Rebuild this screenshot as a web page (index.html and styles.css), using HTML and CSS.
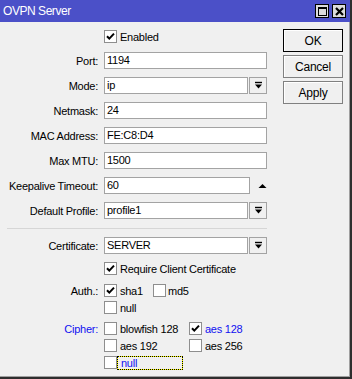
FILE: index.html
```html
<!DOCTYPE html>
<html>
<head>
<meta charset="utf-8">
<link rel="stylesheet" href="styles.css">
</head>
<body>
<div class="window">
  <div class="titlebar">
    <span class="title">OVPN Server</span>
    <div class="tb-buttons">
      <span class="tb-btn"><span class="max-icon"></span></span>
      <span class="tb-btn"><svg width="9" height="9" viewBox="0 0 9 9"><path d="M1 1L8 8M8 1L1 8" stroke="#000" stroke-width="2.2"/></svg></span>
    </div>
  </div>
  <div class="body">
    <div class="form">
      <div class="row check-row first">
        <div class="label"></div>
        <span class="cb checked"><svg width="11" height="11" viewBox="0 0 11 11"><path d="M2 5.2L4.3 7.6L9 2.6" fill="none" stroke="#000" stroke-width="2"/></svg></span>
        <span class="cb-text">Enabled</span>
      </div>
      <div class="row field-row port">
        <div class="label">Port:</div>
        <div class="input full">1194</div>
      </div>
      <div class="row field-row">
        <div class="label">Mode:</div>
        <div class="input short">ip</div>
        <span class="dd"><svg width="9" height="9" viewBox="0 0 9 9"><path d="M1 1.5H8" stroke="#000" stroke-width="1.4"/><path d="M1 3.5H8L4.5 7.5Z" fill="#000"/></svg></span>
      </div>
      <div class="row field-row">
        <div class="label">Netmask:</div>
        <div class="input full">24</div>
      </div>
      <div class="row field-row">
        <div class="label">MAC Address:</div>
        <div class="input full">FE:C8:D4</div>
      </div>
      <div class="row field-row">
        <div class="label">Max MTU:</div>
        <div class="input full">1500</div>
      </div>
      <div class="row field-row">
        <div class="label">Keepalive Timeout:</div>
        <div class="input keep">60</div>
        <span class="up"><svg width="9" height="6" viewBox="0 0 9 6"><path d="M0.5 5H8.5L4.5 1Z" fill="#000"/></svg></span>
      </div>
      <div class="row field-row">
        <div class="label">Default Profile:</div>
        <div class="input short">profile1</div>
        <span class="dd"><svg width="9" height="9" viewBox="0 0 9 9"><path d="M1 1.5H8" stroke="#000" stroke-width="1.4"/><path d="M1 3.5H8L4.5 7.5Z" fill="#000"/></svg></span>
      </div>
      <div class="separator"></div>
      <div class="row field-row cert">
        <div class="label">Certificate:</div>
        <div class="input short">SERVER</div>
        <span class="dd"><svg width="9" height="9" viewBox="0 0 9 9"><path d="M1 1.5H8" stroke="#000" stroke-width="1.4"/><path d="M1 3.5H8L4.5 7.5Z" fill="#000"/></svg></span>
      </div>
      <div class="row check-row req">
        <div class="label"></div>
        <span class="cb checked"><svg width="11" height="11" viewBox="0 0 11 11"><path d="M2 5.2L4.3 7.6L9 2.6" fill="none" stroke="#000" stroke-width="2"/></svg></span>
        <span class="cb-text">Require Client Certificate</span>
      </div>
      <div class="row check-row auth">
        <div class="label">Auth.:</div>
        <div class="opt w1">
          <span class="cb checked"><svg width="11" height="11" viewBox="0 0 11 11"><path d="M2 5.2L4.3 7.6L9 2.6" fill="none" stroke="#000" stroke-width="2"/></svg></span>
          <span class="cb-text">sha1</span>
        </div>
        <div class="opt">
          <span class="cb"></span>
          <span class="cb-text md5">md5</span>
        </div>
      </div>
      <div class="row check-row sub">
        <div class="label"></div>
        <div class="opt">
          <span class="cb"></span>
          <span class="cb-text">null</span>
        </div>
      </div>
      <div class="row check-row cipher">
        <div class="label blue">Cipher:</div>
        <div class="opt w2">
          <span class="cb"></span>
          <span class="cb-text">blowfish 128</span>
        </div>
        <div class="opt">
          <span class="cb checked"><svg width="11" height="11" viewBox="0 0 11 11"><path d="M2 5.2L4.3 7.6L9 2.6" fill="none" stroke="#000" stroke-width="2"/></svg></span>
          <span class="cb-text blue">aes 128</span>
        </div>
      </div>
      <div class="row check-row sub">
        <div class="label"></div>
        <div class="opt w2">
          <span class="cb"></span>
          <span class="cb-text">aes 192</span>
        </div>
        <div class="opt">
          <span class="cb"></span>
          <span class="cb-text">aes 256</span>
        </div>
      </div>
      <div class="row check-row sub">
        <div class="label"></div>
        <div class="opt">
          <span class="cb"></span>
          <span class="cb-text blue focus">null</span>
        </div>
      </div>
    </div>
    <div class="actions">
      <div class="btn default">OK</div>
      <div class="btn">Cancel</div>
      <div class="btn">Apply</div>
    </div>
  </div>
</div>
</body>
</html>
```
FILE: styles.css
```css
html, body {
  margin: 0;
  padding: 0;
  background: #ffffff;
}
body {
  font-family: "Liberation Sans", Arial, sans-serif;
  font-size: 11px;
  letter-spacing: -0.25px;
  color: #000;
}
.window {
  width: 352px;
  height: 379px;
  box-sizing: border-box;
  border-right: 2px solid #2e2e2e;
  border-bottom: 2px solid #2e2e2e;
  background: #f0f0f0;
  display: flex;
  flex-direction: column;
}
.titlebar {
  height: 22px;
  background: #4b50c8;
  display: flex;
  align-items: center;
  justify-content: space-between;
  flex: none;
}
.title {
  color: #fff;
  font-size: 12px;
  margin-left: 3px;
  letter-spacing: -0.45px;
}
.tb-buttons {
  display: flex;
  gap: 3px;
  margin-right: 4px;
}
.tb-btn {
  width: 12px;
  height: 12px;
  border: 1px solid #000;
  background: #dcdcdc;
  display: flex;
  align-items: center;
  justify-content: center;
}
.max-icon {
  width: 7px;
  height: 6px;
  border: 1px solid #000;
  border-top-width: 2px;
}
.body {
  flex: 1;
  display: flex;
  border-right: 1px solid #a0a0a0;
  border-bottom: 1px solid #a0a0a0;
}
.form {
  width: 283px;
  display: flex;
  flex-direction: column;
  padding-top: 8px;
}
.row {
  display: flex;
  align-items: center;
  flex: none;
}
.field-row {
  height: 17px;
  margin-top: 8px;
}
.field-row.port {
  margin-top: 9px;
}
.check-row {
  height: 13px;
}
.check-row.req {
  margin-top: 8px;
}
.check-row.auth {
  margin-top: 9px;
}
.check-row.sub {
  margin-top: 4px;
}
.check-row.cipher {
  margin-top: 8px;
}
.label {
  width: 98px;
  text-align: right;
  margin-right: 6px;
  flex: none;
  white-space: nowrap;
}
.blue {
  color: #1010f0;
}
.input {
  height: 17px;
  box-sizing: border-box;
  border: 1px solid #a3a3a3;
  background: #fff;
  padding-left: 2px;
  line-height: 15px;
  flex: none;
}
.input.full {
  width: 163px;
}
.input.short {
  width: 144px;
}
.input.keep {
  width: 146px;
}
.dd {
  width: 18px;
  height: 17px;
  box-sizing: border-box;
  margin-left: 1px;
  border: 1px solid #a3a3a3;
  background: #f0f0f0;
  display: flex;
  align-items: center;
  justify-content: center;
}
.up {
  margin-left: 8px;
  display: flex;
  align-items: center;
}
.separator {
  height: 1px;
  width: 260px;
  margin-left: 7px;
  margin-top: 9px;
  background: #d6d6d6;
  flex: none;
}
.row.cert {
  margin-top: 8px;
}
.cb {
  width: 13px;
  height: 13px;
  box-sizing: border-box;
  border: 1px solid #8e8e8e;
  background: #fff;
  display: flex;
  align-items: center;
  justify-content: center;
  flex: none;
}
.cb-text {
  margin-left: 3px;
  white-space: nowrap;
}
.cb-text.md5 {
  margin-left: 2px;
}
.opt {
  display: flex;
  align-items: center;
}
.opt.w1 {
  width: 49px;
}
.opt.w2 {
  width: 85px;
}
.focus {
  width: 66px;
  height: 14px;
  box-sizing: border-box;
  line-height: 12px;
  margin-left: 0;
  padding-left: 3px;
  border: 1px solid #ffff00;
  outline: 1px dotted #000;
  outline-offset: -1px;
}
.actions {
  display: flex;
  flex-direction: column;
  gap: 3px;
  padding-top: 7px;
}
.btn {
  width: 60px;
  height: 23px;
  box-sizing: border-box;
  border: 1px solid #808080;
  background: #f0f0f0;
  box-shadow: inset 1px 1px 0 #fff;
  display: flex;
  align-items: center;
  justify-content: center;
  font-size: 12px;
}
.btn.default {
  border-color: #000;
}
```
